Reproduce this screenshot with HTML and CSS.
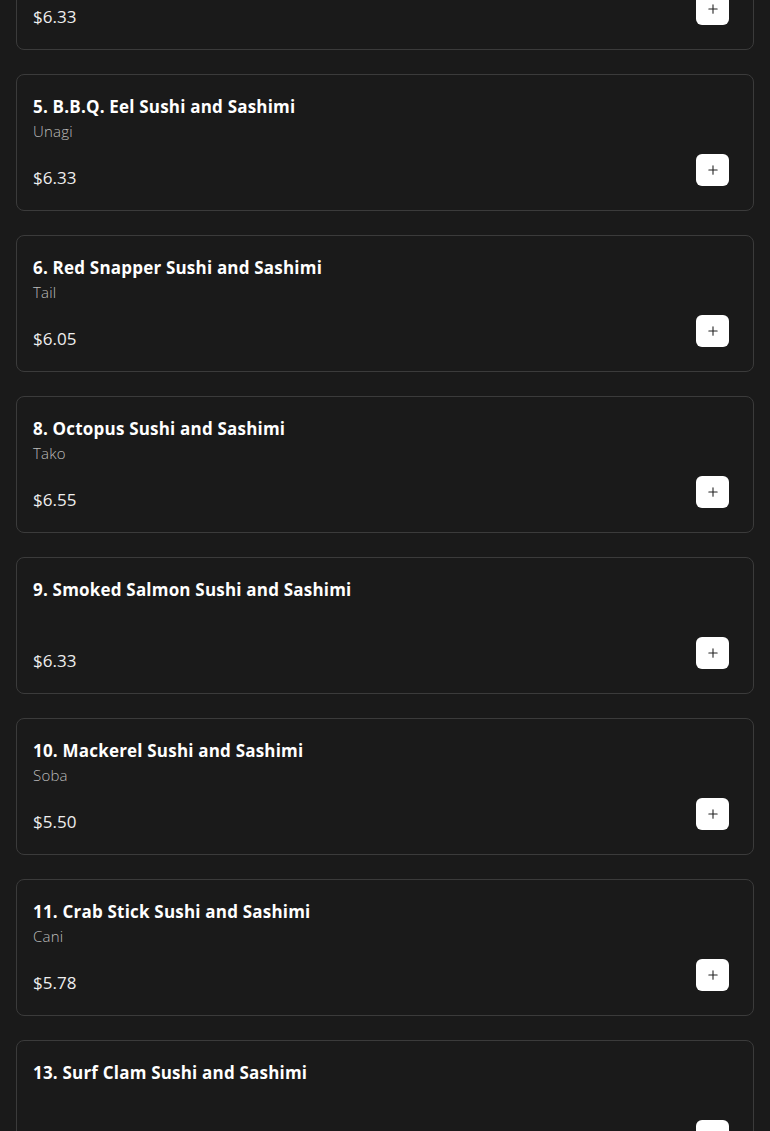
FILE: index.html
```html
<!DOCTYPE html>
<html lang="en">
<head>
  <meta charset="UTF-8">
  <title>Sushi and Sashimi</title>
  <link rel="stylesheet" href="styles.css">
</head>
<body>

  <div class="menu">

    <div class="item">
      <div class="item-name">4. Salmon Sushi and Sashimi</div>
      <div class="item-desc">Sake</div>
      <div class="item-foot">
        <span class="item-price">$6.33</span>
        <button class="add-btn"><svg viewBox="0 0 12 12" width="10" height="10"><path d="M6 1v10M1 6h10" stroke="#222" stroke-width="1.3" stroke-linecap="round"/></svg></button>
      </div>
    </div>

    <div class="item">
      <div class="item-name">5. B.B.Q. Eel Sushi and Sashimi</div>
      <div class="item-desc">Unagi</div>
      <div class="item-foot">
        <span class="item-price">$6.33</span>
        <button class="add-btn"><svg viewBox="0 0 12 12" width="10" height="10"><path d="M6 1v10M1 6h10" stroke="#222" stroke-width="1.3" stroke-linecap="round"/></svg></button>
      </div>
    </div>

    <div class="item">
      <div class="item-name">6. Red Snapper Sushi and Sashimi</div>
      <div class="item-desc">Tail</div>
      <div class="item-foot">
        <span class="item-price">$6.05</span>
        <button class="add-btn"><svg viewBox="0 0 12 12" width="10" height="10"><path d="M6 1v10M1 6h10" stroke="#222" stroke-width="1.3" stroke-linecap="round"/></svg></button>
      </div>
    </div>

    <div class="item">
      <div class="item-name">8. Octopus Sushi and Sashimi</div>
      <div class="item-desc">Tako</div>
      <div class="item-foot">
        <span class="item-price">$6.55</span>
        <button class="add-btn"><svg viewBox="0 0 12 12" width="10" height="10"><path d="M6 1v10M1 6h10" stroke="#222" stroke-width="1.3" stroke-linecap="round"/></svg></button>
      </div>
    </div>

    <div class="item">
      <div class="item-name">9. Smoked Salmon Sushi and Sashimi</div>
      <div class="item-desc"></div>
      <div class="item-foot">
        <span class="item-price">$6.33</span>
        <button class="add-btn"><svg viewBox="0 0 12 12" width="10" height="10"><path d="M6 1v10M1 6h10" stroke="#222" stroke-width="1.3" stroke-linecap="round"/></svg></button>
      </div>
    </div>

    <div class="item">
      <div class="item-name">10. Mackerel Sushi and Sashimi</div>
      <div class="item-desc">Soba</div>
      <div class="item-foot">
        <span class="item-price">$5.50</span>
        <button class="add-btn"><svg viewBox="0 0 12 12" width="10" height="10"><path d="M6 1v10M1 6h10" stroke="#222" stroke-width="1.3" stroke-linecap="round"/></svg></button>
      </div>
    </div>

    <div class="item">
      <div class="item-name">11. Crab Stick Sushi and Sashimi</div>
      <div class="item-desc">Cani</div>
      <div class="item-foot">
        <span class="item-price">$5.78</span>
        <button class="add-btn"><svg viewBox="0 0 12 12" width="10" height="10"><path d="M6 1v10M1 6h10" stroke="#222" stroke-width="1.3" stroke-linecap="round"/></svg></button>
      </div>
    </div>

    <div class="item">
      <div class="item-name">13. Surf Clam Sushi and Sashimi</div>
      <div class="item-desc"></div>
      <div class="item-foot">
        <span class="item-price">$6.33</span>
        <button class="add-btn"><svg viewBox="0 0 12 12" width="10" height="10"><path d="M6 1v10M1 6h10" stroke="#222" stroke-width="1.3" stroke-linecap="round"/></svg></button>
      </div>
    </div>

  </div>

</body>
</html>
```

FILE: styles.css
```css
body {
  margin: 0;
  background: #1a1a1a;
  color: #fff;
  font-family: 'Open Sans', sans-serif;
  overflow: hidden;
}

.menu {
  display: flex;
  flex-direction: column;
  gap: 24px;
  padding: 0 16px;
  margin-top: -87px;
}

.item {
  background: #1a1a1a;
  border: 1px solid #3b3b3b;
  border-radius: 8px;
  padding: 19px 24px 20px 16px;
}

.item-name {
  font-size: 17px;
  font-weight: 700;
  line-height: 26px;
  letter-spacing: 0.2px;
  color: #fff;
}

.item-desc {
  font-size: 15px;
  line-height: 22px;
  min-height: 22px;
  color: #bdbdbd;
  font-weight: 300;
  letter-spacing: 0.2px;
}

.item-foot {
  display: flex;
  justify-content: space-between;
  align-items: flex-end;
  margin-top: 12px;
}

.item-price {
  font-size: 17px;
  line-height: 24px;
  color: #eee;
}

.add-btn {
  width: 33px;
  height: 32px;
  margin-bottom: 4px;
  padding: 0;
  border: none;
  border-radius: 6px;
  background: #fff;
  display: flex;
  align-items: center;
  justify-content: center;
  cursor: pointer;
}
```
